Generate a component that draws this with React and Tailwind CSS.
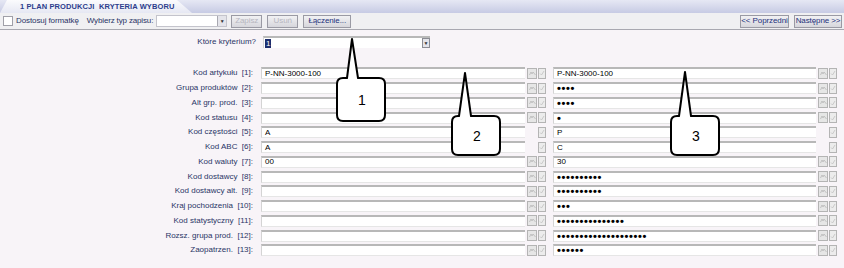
import React from 'react';

const rows = [
  { label: 'Kod artykułu', n: 1, a: 'P-NN-3000-100', b: 'P-NN-3000-100' },
  { label: 'Grupa produktów', n: 2, a: '', b: 4, dots: true },
  { label: 'Alt grp. prod.', n: 3, a: '', b: 4, dots: true },
  { label: 'Kod statusu', n: 4, a: '', b: 1, dots: true },
  { label: 'Kod częstości', n: 5, a: 'A', b: 'P', single: true },
  { label: 'Kod ABC', n: 6, a: 'A', b: 'C', single: true },
  { label: 'Kod waluty', n: 7, a: '00', b: '30' },
  { label: 'Kod dostawcy', n: 8, a: '', b: 10, dots: true },
  { label: 'Kod dostawcy alt.', n: 9, a: '', b: 10, dots: true },
  { label: 'Kraj pochodzenia', n: 10, a: '', b: 3, dots: true },
  { label: 'Kod statystyczny', n: 11, a: '', b: 15, dots: true },
  { label: 'Rozsz. grupa prod.', n: 12, a: '', b: 20, dots: true },
  { label: 'Zaopatrzen.', n: 13, a: '', b: 6, dots: true },
];

function SmallButtons({ single }) {
  return (
    <div className="flex items-center gap-[1px] ml-[2px]">
      {single ? (
        <div className="w-[10px] h-[11px]" />
      ) : (
        <div className="w-[10px] h-[11px] border border-[#b4b4b4] bg-[#e6e6e6] flex items-center justify-center">
          <svg width="7" height="5" viewBox="0 0 7 5">
            <path d="M0.5 4 L2 1 L3 3 L4 1 L6.5 4" fill="none" stroke="#b8b8b8" strokeWidth="0.8" />
          </svg>
        </div>
      )}
      <div className="w-[8px] h-[11px] border border-[#b4b4b4] bg-[#ececec] flex items-center justify-center">
        <svg width="6" height="6" viewBox="0 0 6 6">
          <path d="M1 3.5 L2.5 5 L5 1" fill="none" stroke="#c0c0c0" strokeWidth="0.8" />
        </svg>
      </div>
    </div>
  );
}

function Field({ value, dots, width }) {
  return (
    <div
      className={`${width} h-[12px] bg-white border-t-2 border-t-[#b8b8b8] border-l border-l-[#d4d4d4] border-b border-b-[#e6e6e6] flex items-center px-[3px] overflow-hidden`}
    >
      {dots ? (
        <span className="text-[11px] font-bold tracking-[0.65px] leading-none text-black">{'•'.repeat(value)}</span>
      ) : (
        <span className="text-[8px] leading-none text-black">{value}</span>
      )}
    </div>
  );
}

function Btn({ children, disabled, width }) {
  return (
    <div
      className={`${width} h-[13px] flex items-center justify-center whitespace-nowrap border border-[#9a9aa4] bg-gradient-to-b from-[#f2f2f4] to-[#d6d6dc] text-[8px] leading-none tracking-[-0.1px] ${
        disabled ? 'text-[#b6b6c0]' : 'text-[#22307a]'
      }`}
    >
      {children}
    </div>
  );
}

export default function App() {
  return (
    <div className="w-[844px] h-[268px] relative overflow-hidden flex flex-col bg-[#f8f4f8] font-['Liberation_Sans',Arial,sans-serif]">
      {/* tab strip */}
      <div className="h-[13px] bg-gradient-to-b from-[#e6e8f4] to-[#c7cbe4] flex items-end">
        <div className="w-[192px] h-[13px] bg-gradient-to-b from-[#fbfbfd] to-[#e6e8f3] [clip-path:polygon(7px_0,177px_0,192px_100%,0_100%)] flex items-center pl-[20px]">
          <span className="text-[7.5px] font-bold text-[#2c3d8c] leading-none tracking-[0.1px]">1 PLAN PRODUKCJI&nbsp; KRYTERIA WYBORU</span>
        </div>
      </div>

      {/* toolbar */}
      <div className="h-[17px] bg-[#f0f0f2] border-b border-[#a8a8b0] flex items-center pl-[3px] pr-[2px] text-[8px] leading-none">
        <div className="w-[10px] h-[10px] border border-[#a0a0a8] bg-white" />
        <span className="ml-[3px] text-[#2a3466] tracking-[-0.1px]">Dostosuj formatkę</span>
        <span className="ml-[8px] text-[#2a3466] tracking-[-0.15px]">Wybierz typ zapisu:</span>
        <div className="ml-[3px] w-[71px] h-[12px] bg-white border border-[#c4c4cc] flex justify-end">
          <div className="w-[9px] h-full bg-[#e4e4ea] border-l border-[#a8a8b0] flex items-center justify-center text-[5px] text-[#333]">▼</div>
        </div>
        <div className="ml-[4px] flex gap-[5px]">
          <Btn disabled width="w-[31px]">Zapisz</Btn>
          <Btn disabled width="w-[31px]">Usuń</Btn>
          <Btn width="w-[48px]">Łączenie...</Btn>
        </div>
        <div className="ml-auto flex gap-[5px]">
          <Btn width="w-[49px]">&lt;&lt; Poprzedni</Btn>
          <Btn width="w-[48px]">Następne &gt;&gt;</Btn>
        </div>
      </div>

      {/* content */}
      <div className="flex-1 pt-[6px] text-[8px] leading-none">
        <div className="flex items-center h-[12px]">
          <div className="w-[256px] text-right text-[#2a3466]">Które kryterium?</div>
          <div className="ml-[7px] w-[167px] h-[12px] bg-white border-t-2 border-t-[#b8b8b8] border-l border-l-[#d4d4d4] flex items-center">
            <span className="ml-[1px] px-[1px] bg-[#1c2c6c] text-white leading-[9px]">1</span>
            <div className="ml-auto w-[8px] h-[10px] bg-[#e4e4ea] border border-[#8c8c94] flex items-center justify-center text-[5px] text-[#333]">▼</div>
          </div>
        </div>

        <div className="mt-[18px] flex flex-col">
          {rows.map((r) => (
            <div key={r.n} className="h-[14.75px] flex items-center">
              <div className="w-[253px] text-right text-[#2a3466] whitespace-pre">
                {r.label}  [{r.n}]:
              </div>
              <div className="ml-[8px]">
                <Field value={r.a} width="w-[264px]" />
              </div>
              <SmallButtons single={r.single} />
              <div className="ml-[7px]">
                <Field value={r.b} dots={r.dots} width="w-[263px]" />
              </div>
              <SmallButtons single={r.single} />
            </div>
          ))}
        </div>
      </div>

      {/* callouts */}
      <svg className="absolute left-[330px] top-[35px]" width="62" height="92" viewBox="330 35 62 92">
        <path
          d="M343 78 L347 78 L352 39 L358 78 L379 78 Q385 78 385 84 L385 115 Q385 121 379 121 L343 121 Q337 121 337 115 L337 84 Q337 78 343 78 Z"
          fill="white"
          stroke="black"
          strokeWidth="2"
          strokeLinejoin="round"
        />
        <text x="362" y="105" textAnchor="middle" fontSize="14" fontFamily="Liberation Sans, Arial, sans-serif">1</text>
      </svg>
      <svg className="absolute left-[446px] top-[68px]" width="62" height="94" viewBox="446 68 62 94">
        <path
          d="M458 116 L459 116 L465 73 L471 116 L494 116 Q500 116 500 122 L500 149 Q500 155 494 155 L458 155 Q452 155 452 149 L452 122 Q452 116 458 116 Z"
          fill="white"
          stroke="black"
          strokeWidth="2"
          strokeLinejoin="round"
        />
        <text x="477" y="141" textAnchor="middle" fontSize="14" fontFamily="Liberation Sans, Arial, sans-serif">2</text>
      </svg>
      <svg className="absolute left-[665px] top-[68px]" width="62" height="94" viewBox="665 68 62 94">
        <path
          d="M677 116 L679 116 L685 72 L691 116 L713 116 Q719 116 719 122 L719 149 Q719 155 713 155 L677 155 Q671 155 671 149 L671 122 Q671 116 677 116 Z"
          fill="white"
          stroke="black"
          strokeWidth="2"
          strokeLinejoin="round"
        />
        <text x="696" y="141" textAnchor="middle" fontSize="14" fontFamily="Liberation Sans, Arial, sans-serif">3</text>
      </svg>
    </div>
  );
}
